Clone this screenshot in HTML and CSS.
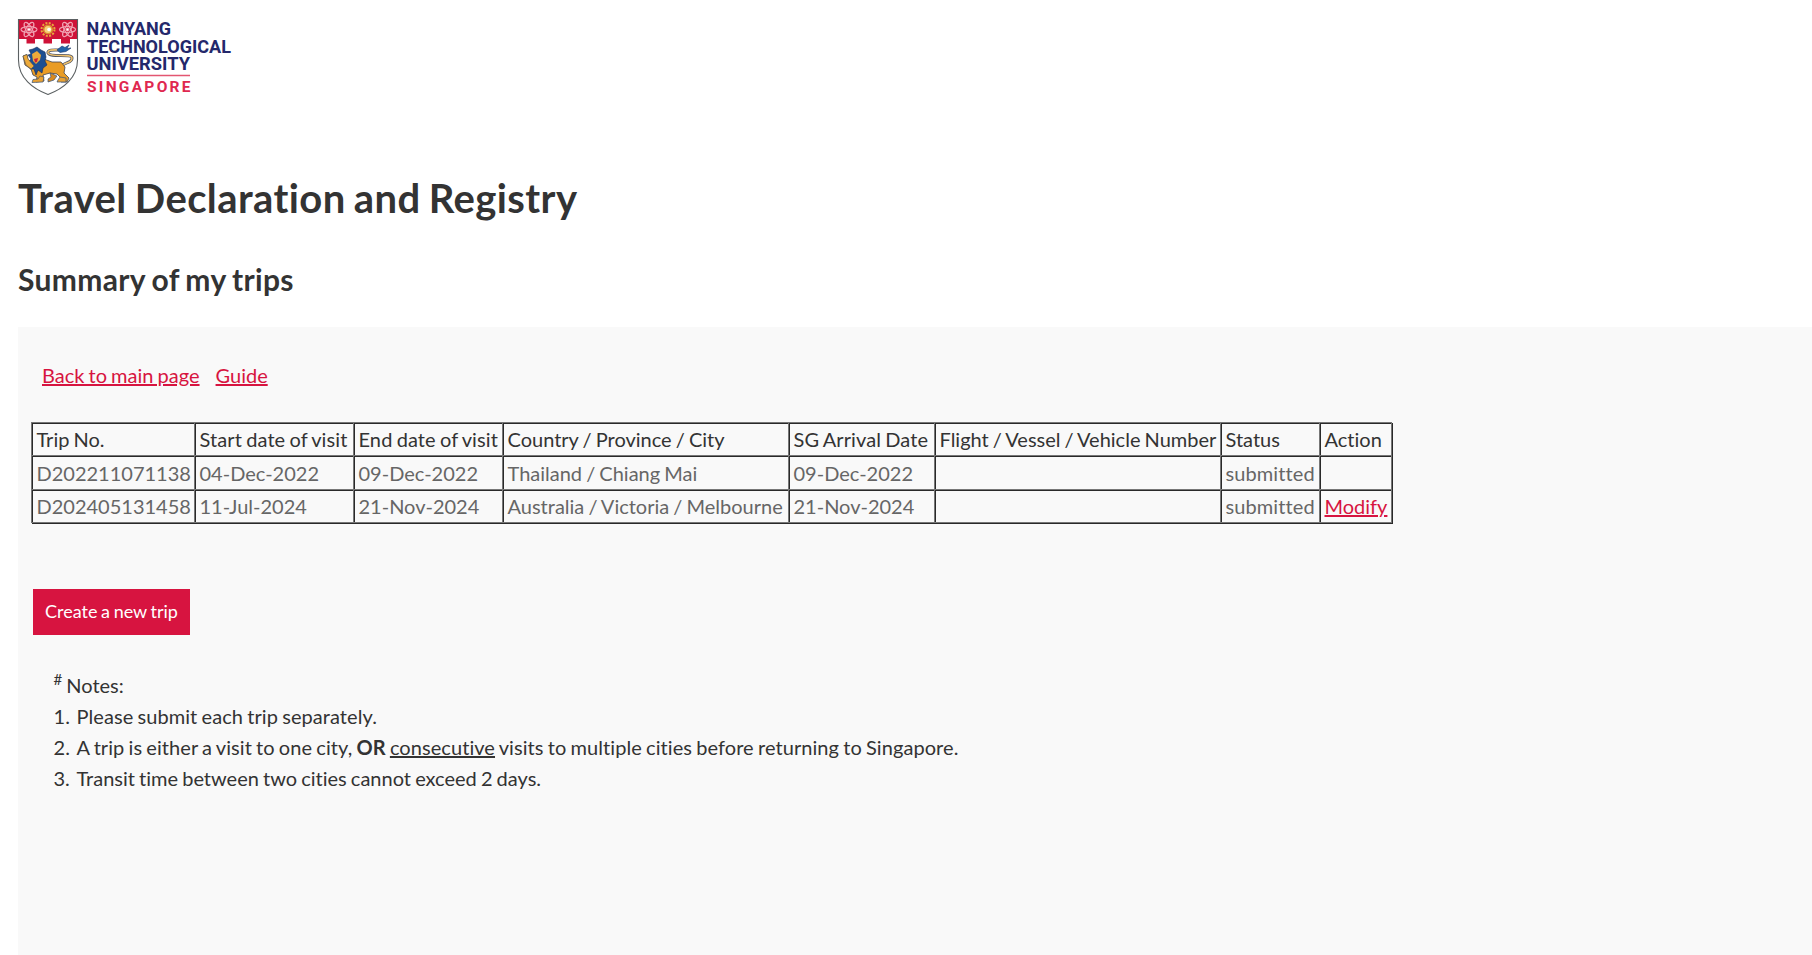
FILE: index.html
```html
<!DOCTYPE html>
<html lang="en">
<head>
<meta charset="utf-8">
<title>Travel Declaration and Registry</title>
<link rel="stylesheet" href="styles.css">
</head>
<body>
<header class="brand">
<svg class="logo" width="232" height="96" viewBox="0 0 232 96" role="img" aria-label="Nanyang Technological University Singapore">
  <defs>
    <clipPath id="shield"><path d="M18.5 19.500H77.500V60C77.500 78 63 89 48 94.500C33 89 18.500 78 18.500 60Z"/></clipPath>
    <g id="atom" fill="none" stroke="#f0a3b2" stroke-width="1.100">
      <ellipse rx="8" ry="3"/>
      <ellipse rx="8" ry="3" transform="rotate(60)"/>
      <ellipse rx="8" ry="3" transform="rotate(120)"/>
      <circle r="1.500" fill="#fff"/>
    </g>
  </defs>
  <g clip-path="url(#shield)">
    <path d="M18 19H78V96H18Z" fill="#fff"/>
    <path d="M18 19H78V39H70V43.500H61V39H52V43.500H43.500V39H35V43.500H26.500V39H18Z" fill="#cf1238"/>
  </g>
  <use href="#atom" x="29" y="29.500"/>
  <use href="#atom" x="67.500" y="29.500"/>
  <circle cx="48" cy="29.500" r="6.500" fill="none" stroke="#e8a83b" stroke-width="2" stroke-dasharray="2 1.400"/>
  <circle cx="48" cy="29.500" r="4.300" fill="#f7d27a" stroke="#d78a2c" stroke-width="1.600"/>
  <circle cx="49" cy="29.500" r="1.800" fill="#fff"/>
  <!-- tail -->
  <path d="M60 68C64 61 72 64 72 58C72 53 50 58 48 53C47 49 56 50 60 50" fill="none" stroke="#4c5364" stroke-width="3"/>
  <path d="M60 68C64 61 72 64 72 58C72 53 50 58 48 53C47 49 56 50 60 50" fill="none" stroke="#edc06d" stroke-width="1.600"/>
  <path d="M57 50L62 46L65 47.500L69 45L67 48.500L71 48L66 51.500L60 52.500Z" fill="#2463a8" stroke="#1d3768" stroke-width=".6"/>
  <!-- body and legs -->
  <path d="M23 56L27 54.500L28 60L33 64L41 58L52 62L61 62L65 67L64 73L69 78L67 82L61 82L62 79L57 74L50 73L43 75L44 81L36 82L37 77L33 75L31 69L25 65Z" fill="#e99c25" stroke="#3f4250" stroke-width=".8"/>
  <path d="M50 73L57 76L54 80L48 82L48 79L51 77Z" fill="#d88a20" stroke="#365177" stroke-width=".7"/>
  <path d="M40 76L44 77L43 82L32 82.500L33 79.500L38 79Z" fill="#e9a132" stroke="#365177" stroke-width=".7"/>
  <path d="M60 77L66 78L66 82L57 82L58 80Z" fill="#e9a132" stroke="#365177" stroke-width=".7"/>
  <!-- mane and face -->
  <path d="M29 50L33 49L37 47L41 50L45 52L46 57L45 61L47 65L43 68L42 73L38 70L36 75L34 69L30 69L31 65L28 62L31 59L28 55L31 54Z" fill="#1d4f91" stroke="#192c55" stroke-width=".6"/>
  <path d="M32 54L37 51L41 55L40 60L36 64L33 61Z" fill="#edaa3a"/>
  <path d="M34 59L38 58L37 62L35 62.500Z" fill="#c8203a"/>
  <path d="M23 56L27 54.500L28 59L34 66L31 69L26 65Z" fill="#edaa3a" stroke="#565049" stroke-width=".6"/>
  <path d="M18.500 19.500H77.500V60C77.500 78 63 89 48 94.500C33 89 18.500 78 18.500 60Z" fill="none" stroke="#5b6062" stroke-width="1.100"/>
  <g class="wordmark">
    <text x="86.500" y="34.500" textLength="84.500" lengthAdjust="spacingAndGlyphs">NANYANG</text>
    <text x="87" y="52.500" textLength="144" lengthAdjust="spacingAndGlyphs">TECHNOLOGICAL</text>
    <text x="86.500" y="70" textLength="103.500" lengthAdjust="spacingAndGlyphs">UNIVERSITY</text>
  </g>
  <path d="M87 75.500H190" stroke="#e35671" stroke-width="1.300"/>
  <text class="country" x="87" y="91.800" textLength="103.500">SINGAPORE</text>
</svg>
</header>
<main>
<h1 class="title">Travel Declaration and Registry</h1>
<h2 class="subtitle">Summary of my trips</h2>
<section class="panel">
<nav class="links"><a href="#">Back to main page</a><a href="#">Guide</a></nav>
<table class="trips">
<colgroup><col class="c-trip"><col class="c-start"><col class="c-end"><col class="c-country"><col class="c-arrival"><col class="c-flight"><col class="c-status"><col class="c-action"></colgroup>
<thead><tr><th>Trip No.</th><th class="wide">Start date of visit</th><th class="wide">End date of visit</th><th>Country / Province / City</th><th class="wide">SG Arrival Date</th><th>Flight / Vessel / Vehicle Number</th><th>Status</th><th>Action</th></tr></thead>
<tbody>
<tr class="tall"><td>D202211071138</td><td>04-Dec-2022</td><td>09-Dec-2022</td><td>Thailand / Chiang Mai</td><td>09-Dec-2022</td><td></td><td class="wide">submitted</td><td></td></tr>
<tr><td>D202405131458</td><td>11-Jul-2024</td><td>21-Nov-2024</td><td>Australia / Victoria / Melbourne</td><td>21-Nov-2024</td><td></td><td class="wide">submitted</td><td><a href="#">Modify</a></td></tr>
</tbody>
</table>
<button class="create" type="button">Create a new trip</button>
<div class="notes">
<p class="notes-title"><sup>#</sup> Notes:</p>
<ol>
<li class="loose"><span class="num">1.</span>Please submit each trip separately.</li>
<li class="loose"><span class="num">2.</span>A trip is either a visit to one city, <b>OR</b> <u>consecutive</u> visits to multiple cities before returning to Singapore.</li>
<li><span class="num">3.</span>Transit time between two cities cannot exceed 2 days.</li>
</ol>
</div>
</section>
</main>
</body>
</html>
```
FILE: styles.css
```css
* { box-sizing: border-box; }
body { margin: 0; background: #fff; color: #333; font: 20px/31px Lato, "Liberation Sans", sans-serif; font-variant-ligatures: none; word-spacing: -1px; overflow: hidden; }
a { color: #d71440; text-decoration: underline; }
.brand { height: 170px; }
.logo { display: block; }
.wordmark { font: 700 17.5px Roboto, sans-serif; fill: #24286b; }
.country { font: 700 15.5px Roboto, sans-serif; fill: #df2850; }
main { padding-left: 18px; }
.title { margin: 0; font-size: 40px; line-height: 56px; font-weight: 700; letter-spacing: .41px; word-spacing: -2px; }
.subtitle { margin: 33px 0 0; font-size: 30px; line-height: 40px; font-weight: 700; letter-spacing: .35px; word-spacing: -1.5px; }
.panel { margin-top: 28px; height: 628px; padding: 33px 0 0 13px; background: #f9f9f9; }
.links { display: flex; gap: 16px; padding-left: 11px; }
.trips { margin-top: 31px; width: 1361px; table-layout: fixed; border-collapse: separate; border-spacing: 0; border: solid #777; border-width: 0 1px 1px 0; box-shadow: 1px 1px 0 #2a2a2a; }
.trips th, .trips td { height: 33px; padding: 0 0 0 4.5px; border: solid #777; border-width: 1px 0 0 1px; box-shadow: inset 1px 1px 0 #2a2a2a; text-align: left; white-space: nowrap; font-weight: 400; line-height: 31px; }
.trips td { color: #666; }
.trips .tall td { height: 34px; padding-top: 2px; }
.trips .wide { letter-spacing: .1px; }
.c-trip { width: 163px; }
.c-start { width: 159px; }
.c-end { width: 149px; }
.c-country { width: 286px; }
.c-arrival { width: 146px; }
.c-flight { width: 286px; }
.c-status { width: 99px; }
.c-action { width: 72px; }
.create { display: block; margin: 66px 0 0 2px; width: 157px; height: 46px; padding: 0 0 2px; border: 0; background: #d71440; color: #fff; font: 18px/44px Lato, sans-serif; word-spacing: -1px; }
.notes { margin: 35px 0 0 22px; }
.notes p, .notes ol { margin: 0; padding: 0; list-style: none; }
.notes p { padding-left: .5px; }
.notes-title sup { font-size: 15px; line-height: 0; }
.notes li { padding-left: .5px; }
.notes .loose { letter-spacing: .07px; }
.num { display: inline-block; width: 23px; }
```
